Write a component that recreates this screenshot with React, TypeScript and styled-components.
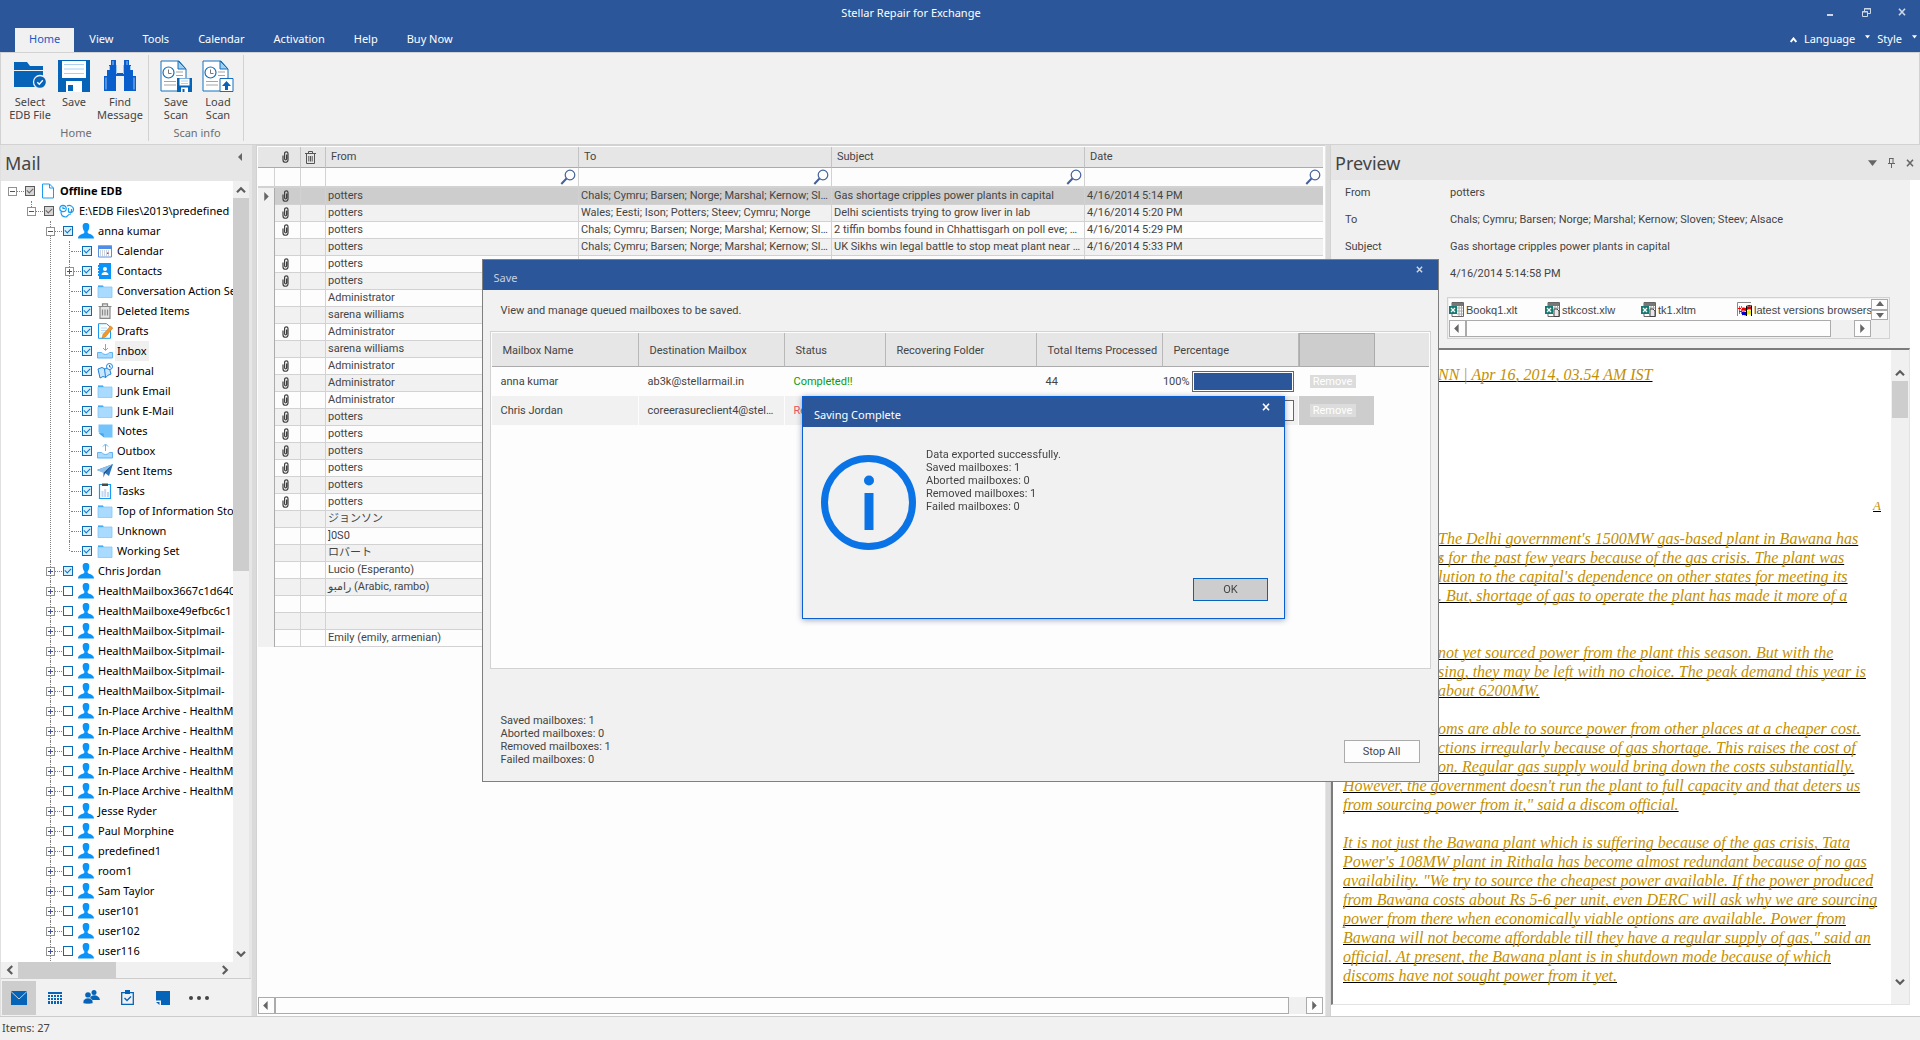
import React from "react";
import styled, { createGlobalStyle, css } from "styled-components";

const ui = `"Noto Sans", "Open Sans", sans-serif`;
const grid = `Roboto, "Liberation Sans", "Noto Sans CJK JP", "DejaVu Sans", sans-serif`;
const files = `"Liberation Sans", sans-serif`;
const blue = "#2b579a";
const ink = "#444444";
const line = "#d2d2d2";
const accent = "#0563c1";

const Global = createGlobalStyle`
  *, *::before, *::after { box-sizing: border-box; }
  html, body, #root { margin: 0; height: 100%; }
  body { overflow: hidden; background: #f1f1f1; }
  button, input { font: inherit; color: inherit; margin: 0; padding: 0; border: 0; background: none; border-radius: 0; }
  svg { display: block; flex: none; }
  ul { list-style: none; margin: 0; padding: 0; }
`;

/* ---------- shell ---------- */
const Shell = styled.div`
  display: flex;
  flex-direction: column;
  height: 100vh;
  font: 11px/14px ${ui};
  color: ${ink};
  background: #f1f1f1;
`;
const Top = styled.header`
  background: ${blue};
  color: #fff;
`;
const TitleBar = styled.div`
  display: flex;
  height: 28px;
`;
const Title = styled.h1`
  flex: 1;
  margin: 0;
  font: 11px/26px ${ui};
  text-align: center;
`;
const WinButtons = styled.div`
  display: flex;
  padding-right: 10px;
  gap: 20px;
  height: 24px;
`;
const IconButton = styled.button<{ $tone?: string }>`
  display: grid;
  place-items: center;
  width: 16px;
  color: ${(p) => p.$tone ?? "#cfd8e6"};
`;
const TabRow = styled.nav`
  display: flex;
  gap: 1px;
  height: 24px;
  padding-left: 15px;
`;
const Tab = styled.button<{ $active?: boolean }>`
  padding: 0 14px;
  line-height: 22px;
  padding-bottom: 2px;
  height: ${(p) => (p.$active ? 25 : 24)}px;
  ${(p) => p.$active && css`
    padding-bottom: 3px;
    background: #f1f1f1;
    color: #1859c4;
  `}
`;
const Options = styled.div`
  display: flex;
  align-items: center;
  gap: 7px;
  margin-left: auto;
  padding-right: 3px;
`;
const OptionButton = styled.button`
  display: flex;
  align-items: center;
  gap: 10px;
  line-height: 22px;
  padding-bottom: 2px;
  svg { margin-bottom: 6px; }
`;

const Ribbon = styled.section`
  display: flex;
  height: 93px;
  border: 1px solid ${line};
  background: #f1f1f1;
`;
const Group = styled.div<{ $pad: string }>`
  display: flex;
  flex-direction: column;
  justify-content: space-between;
  margin: 2px 0 3px;
  padding: ${(p) => p.$pad};
  border-right: 1px solid ${line};
`;
const Tools = styled.div`
  display: flex;
`;
const Tool = styled.button<{ $w: number }>`
  display: flex;
  flex-direction: column;
  align-items: center;
  gap: 3px;
  width: ${(p) => p.$w}px;
  line-height: 13px;
  text-align: center;
`;
const GroupName = styled.div`
  text-align: center;
  color: #6d6d6d;
  line-height: 14px;
`;

const Main = styled.main`
  display: flex;
  flex: 1;
  min-height: 0;
  background: #e6e6e6;
`;
const Splitter = styled.div<{ $w: number }>`
  width: ${(p) => p.$w}px;
  border-left: 1px solid #e6e6e6;
  border-right: 1px solid ${line};
  background: #dadada;
`;
const Status = styled.footer`
  height: 24px;
  border-top: 1px solid #cccccc;
  padding-left: 2px;
  line-height: 22px;
`;

/* ---------- sidebar ---------- */
const Side = styled.aside`
  display: flex;
  flex-direction: column;
  width: 251px;
  border-left: 1px solid #e0e0e0;
`;
const PaneHead = styled.div`
  display: flex;
  justify-content: space-between;
  align-items: flex-start;
  height: 36px;
  padding: 0 2px 0 4px;
`;
const PaneTitle = styled.h2`
  margin: 0;
  font: 18px/36px ${ui};
`;
const FoldButton = styled(IconButton)`
  height: 24px;
`;
const TreeArea = styled.div`
  display: flex;
  flex: 1;
  min-height: 0;
  margin-right: 2px;
`;
const TreeBox = styled.div`
  flex: 1;
  min-width: 0;
  overflow: hidden;
  background: #fff;
  color: #000;
`;
const Node = styled.li<{ $depth: number; $last?: boolean }>`
  position: relative;
  ${(p) => p.$depth > 0 && css`
    &::before {
      content: "";
      position: absolute;
      left: ${p.$depth * 19 + 11}px;
      top: 0;
      bottom: ${p.$last ? "auto" : 0};
      height: ${p.$last ? "10px" : "auto"};
      border-left: 1px dotted #808080;
    }
  `}
`;
const NodeRow = styled.div<{ $depth: number }>`
  position: relative;
  display: flex;
  align-items: center;
  height: 20px;
  padding-left: ${(p) => p.$depth * 19 + 7}px;
  white-space: nowrap;
  &::before {
    content: "";
    position: absolute;
    left: ${(p) => p.$depth * 19 + 13}px;
    top: 10px;
    width: 10px;
    border-top: 1px dotted #808080;
  }
`;
const Expander = styled.button`
  position: relative;
  display: grid;
  place-items: center;
  flex: none;
  width: 9px;
  height: 9px;
  margin-right: 8px;
  border: 1px solid #919191;
  background: #fff;
`;
const NoExpander = styled.span`
  flex: none;
  width: 17px;
`;
const Check = styled.input<{ $grey?: boolean }>`
  appearance: none;
  position: relative;
  flex: none;
  width: 10px;
  height: 10px;
  margin-right: 5px;
  border: 1px solid ${(p) => (p.$grey ? "#5a5a5a" : "#0a6ab6")};
  background: ${(p) => (p.$grey ? "#d6d6d6" : "#fff")};
  &:checked {
    background-color: ${(p) => (p.$grey ? "#d6d6d6" : "#d9effb")};
  }
  &:checked::after {
    content: "";
    position: absolute;
    left: 1px;
    top: 1px;
    width: 6px;
    height: 4px;
    border: solid ${(p) => (p.$grey ? "#666" : "#0a78c8")};
    border-width: 0 0 1px 1px;
    transform: rotate(-45deg);
  }
`;
const NodeName = styled.label<{ $bold?: boolean; $selected?: boolean }>`
  margin-left: 2px;
  padding: 0 2px;
  line-height: 20px;
  font-weight: ${(p) => (p.$bold ? 700 : 400)};
  background: ${(p) => (p.$selected ? "#f0f0f0" : "transparent")};
`;
const NavBar = styled.div`
  display: flex;
  align-items: center;
  gap: 2px;
  height: 38px;
  padding-left: 1px;
  border-top: 1px solid #cdcdcd;
  background: #f1f1f1;
`;
const NavButton = styled.button<{ $on?: boolean }>`
  display: grid;
  place-items: center;
  width: 34px;
  height: 34px;
  background: ${(p) => (p.$on ? "#cdcdcd" : "transparent")};
`;

/* ---------- scrollbars ---------- */
const VBar = styled.div<{ $w: number; $pad?: string }>`
  display: flex;
  flex-direction: column;
  width: ${(p) => p.$w}px;
  padding: ${(p) => p.$pad ?? "0"};
  background: #f0f0f0;
`;
const VThumb = styled.div<{ $h: string }>`
  height: ${(p) => p.$h};
  margin-bottom: auto;
  background: #cdcdcd;
`;
const ScrollEnd = styled.button`
  display: grid;
  place-items: center;
  flex: none;
  height: 17px;
  width: 100%;
`;
const HBar = styled.div`
  display: flex;
  height: 16px;
  margin-right: 2px;
  padding-right: 16px;
  background: #f0f0f0;
`;
const HThumb = styled.div`
  width: 98px;
  margin-right: auto;
  background: #cdcdcd;
`;
const HEnd = styled.button`
  display: grid;
  place-items: center;
  width: 17px;
`;
const BoxBar = styled.div<{ $right?: number }>`
  display: flex;
  height: 17px;
  background: #f0f0f0;
  padding-right: ${(p) => p.$right ?? 0}px;
`;
const BoxEnd = styled.button`
  display: grid;
  place-items: center;
  width: 17px;
  border: 1px solid #ababab;
  background: #fdfdfd;
`;
const BoxThumb = styled.div<{ $gap: number }>`
  flex: 1;
  margin-right: ${(p) => p.$gap}px;
  border: 1px solid #ababab;
  background: #fdfdfd;
`;

/* ---------- message grid ---------- */
const GridPane = styled.section`
  display: flex;
  flex-direction: column;
  flex: 1;
  min-width: 0;
  padding: 1px 2px 2px 1px;
  background: #fdfdfd;
  border-top: 1px solid ${line};
  font: 11px/14px ${grid};
`;
const GridScroll = styled.div`
  flex: 1;
  min-height: 0;
  overflow: hidden;
`;
const MailTable = styled.table`
  width: 100%;
  table-layout: fixed;
  border-collapse: separate;
  border-spacing: 0;
  th {
    height: 21px;
    padding: 0 5px;
    text-align: left;
    font-weight: 400;
    background: #e6e6e6;
    border-bottom: 1px solid #ababab;
    border-right: 1px solid #c4c4c4;
  }
  th:first-child, th:last-child { border-right: 0; }
  th:nth-child(2), th:nth-child(3) { padding: 0 5px 0 0; }
  th svg { margin: 0 auto; }
`;
const FilterCell = styled.td`
  height: 20px;
  padding: 0 2px;
  border-right: 1px solid ${line};
  border-bottom: 2px solid ${line};
  &:last-child { border-right: 0; }
`;
const FilterBox = styled.label`
  display: flex;
  align-items: center;
  input { flex: 1; min-width: 0; height: 16px; outline: 0; }
`;
const MailRow = styled.tr<{ $tone: string }>`
  td {
    height: 17px;
    padding: 0 2px;
    line-height: 16px;
    overflow: hidden;
    white-space: nowrap;
    text-overflow: ellipsis;
    background: ${(p) => p.$tone};
    border-right: 1px solid ${line};
    border-bottom: 1px solid ${line};
  }
  td:last-child { border-right: 0; }
  td:first-child { background: #f1f1f1; border-bottom: 0; border-right-color: #ababab; }
  td:nth-child(2) { padding: 0 5px 0 0; }
  td svg { margin: 0 auto; }
`;

/* ---------- preview ---------- */
const Preview = styled.aside`
  display: flex;
  flex-direction: column;
  width: 589px;
  background: #fff;
`;
const PreviewHead = styled(PaneHead)`
  background: #e6e6e6;
  height: 35px;
  align-items: center;
`;
const HeadButtons = styled.div`
  display: flex;
  gap: 3px;
`;
const Facts = styled.dl`
  display: grid;
  grid-template-columns: 105px 1fr;
  align-content: start;
  row-gap: 13px;
  margin: 0 10px 0 0;
  padding: 6px 14px 0;
  height: 117px;
  font: 11px/14px ${grid};
  background: #f1f1f1;
  dt, dd { margin: 0; }
`;
const AttachWrap = styled.div`
  margin-right: 10px;
  padding: 0 20px 9px 116px;
  background: #f1f1f1;
`;
const AttachBox = styled.div`
  border: 1px solid ${line};
  padding: 1px;
`;
const AttachRow = styled.div`
  display: flex;
  height: 21px;
`;
const AttachList = styled.ul`
  display: flex;
  flex: 1;
  min-width: 0;
  overflow: hidden;
  background: #fdfdfd;
`;
const AttachItem = styled.li`
  display: flex;
  align-items: center;
  gap: 2px;
  flex: none;
  width: 96px;
  font: 11px/20px ${files};
  white-space: nowrap;
`;
const Spin = styled.div`
  display: flex;
  flex-direction: column;
  width: 17px;
`;
const SpinButton = styled.button`
  display: grid;
  place-items: center;
  flex: 1;
  border: 1px solid #ababab;
  background: #fdfdfd;
`;
const MessageFrame = styled.div`
  display: flex;
  flex: 1;
  min-height: 0;
  margin: 0 10px 11px 0;
  border: 1px solid #e3e3e3;
  border-left: 2px solid #7c7c7c;
  border-top: 2px solid #7c7c7c;
`;
const MessageBody = styled.article`
  flex: 1;
  min-width: 0;
  overflow: hidden;
  padding: 15px 0 0 10px;
  color: #c49000;
  font: italic 16px/19px "Liberation Serif", serif;
`;
const Para = styled.p<{ $gap: number }>`
  margin: 0 0 ${(p) => p.$gap}px;
`;
const TextLine = styled.span`
  display: block;
  white-space: pre;
  text-decoration: underline 1px #000;
  text-underline-offset: 1px;
  text-decoration-skip-ink: none;
`;
const Lead = styled.span`
  display: inline-block;
  width: 95px;
  text-align: right;
`;
const Footnote = styled(TextLine)`
  font-size: 13px;
  text-align: right;
  padding-right: 10px;
`;

/* ---------- dialogs ---------- */
const Overlay = styled.div`
  position: fixed;
  inset: 0;
  display: grid;
  place-items: center;
`;
const SaveDialog = styled.section`
  display: flex;
  flex-direction: column;
  width: 957px;
  height: 523px;
  border: 1px solid #7f7f7f;
  background: #f1f1f1;
  font: 11px/13px ${grid};
`;
const DialogTitle = styled.header<{ $dim?: boolean }>`
  display: flex;
  justify-content: space-between;
  height: 30px;
  padding: 2px 10px 0 11px;
  background: ${blue};
  color: ${(p) => (p.$dim ? "#c8d0dc" : "#fff")};
  font: 11px/14px ${ui};
  h2 { margin: 9px 0 0; font: inherit; }
  button { height: 16px; }
`;
const Intro = styled.p`
  margin: 14px 18px 14px;
`;
const QueueBox = styled.div`
  height: 338px;
  margin: 0 7px;
  padding: 1px;
  border: 1px solid ${line};
  background: #fdfdfd;
`;
const QueueTable = styled.table`
  width: 100%;
  table-layout: fixed;
  border-collapse: separate;
  border-spacing: 0;
  th {
    height: 34px;
    padding: 2px 0 0 11px;
    text-align: left;
    font-weight: 400;
    white-space: nowrap;
    background: #e6e6e6;
    border-bottom: 1px solid #ababab;
    border-right: 1px solid #b8b8b8;
  }
  th:last-child { border-right: 0; }
  th:nth-child(7) { background: #cdcdcd; border: 1px solid #ababab; }
  td {
    height: 29px;
    padding: 0 9px;
    white-space: nowrap;
    overflow: hidden;
    text-overflow: ellipsis;
    border-right: 1px solid #fdfdfd;
  }
  td:nth-child(6) { padding: 0 4px; }
  td:nth-child(7) { padding: 0 11px; }
`;
const QueueRow = styled.tr<{ $alt?: boolean }>`
  td { background: ${(p) => (p.$alt ? "#f1f1f1" : "transparent")}; }
  td:nth-child(7) { background: ${(p) => (p.$alt ? "#cdcdcd" : "transparent")}; }
  td:last-child { background: transparent; }
`;
const State = styled.span<{ $color: string }>`
  color: ${(p) => p.$color};
`;
const Percent = styled.div`
  display: flex;
  align-items: center;
  gap: 2px;
  justify-content: flex-end;
`;
const Meter = styled.div`
  flex: none;
  width: 102px;
  height: 21px;
  padding: 1px;
  border: 1px solid #666;
  background: #fdfdfd;
`;
const MeterFill = styled.div<{ $value: number }>`
  width: ${(p) => p.$value}%;
  height: 100%;
  background: ${blue};
`;
const RemoveButton = styled.button`
  display: block;
  width: 46px;
  height: 13px;
  line-height: 13px;
  background: #dcdcdc;
  color: #fff;
`;
const Lines = styled.div`
  white-space: pre-line;
`;
const PushButton = styled.button<{ $primary?: boolean; $w?: number }>`
  width: ${(p) => p.$w ?? 75}px;
  height: 23px;
  border: 1px solid ${(p) => (p.$primary ? accent : "#ababab")};
  background: ${(p) => (p.$primary ? "#cdcdcd" : "#fdfdfd")};
`;
const SaveFoot = styled.footer`
  display: flex;
  justify-content: space-between;
  align-items: flex-end;
  flex: 1;
  padding: 0 18px 15px;
  ${PushButton} { margin-bottom: 3px; }
`;
const DoneDialog = styled.section`
  position: absolute;
  left: 802px;
  top: 396px;
  display: flex;
  flex-direction: column;
  width: 483px;
  height: 223px;
  border: 1px solid #0a5fd0;
  background: #f1f1f1;
  box-shadow: 0 1px 6px rgba(0, 30, 90, 0.4);
  font: 11px/13px ${grid};
`;
const DoneBody = styled.div`
  display: flex;
  gap: 10px;
  flex: 1;
  padding: 28px 18px 0;
  ${Lines} { margin-top: -7px; }
`;
const DoneFoot = styled.footer`
  display: flex;
  justify-content: flex-end;
  padding: 0 16px 17px;
`;

/* ---------- glyphs ---------- */
const Cross = ({ s = 8 }: { s?: number }) => (
  <svg width={s} height={s} viewBox="0 0 8 8" stroke="currentColor" strokeWidth="1.6"><path d="M1 .8 7 7.2M7 .8 1 7.2" /></svg>
);
const Tri = ({ d, c = "#666", s = 6 }: { d: "l" | "r" | "u" | "d"; c?: string; s?: number }) => {
  const p = { l: "M5 0v8L1 4z", r: "M2 0v8l4-4z", u: "M0 6h8L4 1z", d: "M0 2h8L4 7z" }[d];
  return <svg width={s} height={s} viewBox="0 0 8 8" fill={c}><path d={p} /></svg>;
};
const Chevron = ({ d }: { d: "l" | "r" | "u" | "d" }) => {
  const r = { u: 0, r: 90, d: 180, l: 270 }[d];
  return (
    <svg width="10" height="10" viewBox="0 0 10 10" fill="none" stroke="#5c5c5c" strokeWidth="2.2">
      <path d="M1 7.2 5 3.2 9 7.2" transform={`rotate(${r} 5 5)`} />
    </svg>
  );
};
const Clip = () => (
  <svg width="7" height="12" viewBox="0 0 7 12" fill="none" stroke="#404040" strokeWidth="1.2">
    <path d="M2.600 3v4.800c0 1.500 2 1.500 2 0V3.500M1 4.500V9c0 3 5 3 5 0V2.500C6 .300 2.600.300 2.600 2.500V4" />
  </svg>
);
const Bin = () => (
  <svg width="11" height="13" viewBox="0 0 11 13" fill="none" stroke="#555">
    <path d="M0 2.500h11M3.500 2.500v-2h4v2M1.500 3v9.500h8V3M3.800 5v5.500M5.500 5v5.500M7.200 5v5.500" />
  </svg>
);
const Lens = () => (
  <svg width="16" height="16" viewBox="0 0 16 16" fill="none" stroke="#44619a">
    <circle cx="10" cy="6" r="4.800" strokeWidth="1.200" /><path d="M6.500 9.500 1.300 15" strokeWidth="2" />
  </svg>
);
const Deep = "#0563b8";
const FolderTool = () => (
  <svg width="32" height="32" viewBox="0 0 32 32">
    <path d="M0 2h13l3 4h13v4H0zM0 11h29v16H0z" fill={Deep} />
    <circle cx="26" cy="22" r="6.500" fill={Deep} stroke="#f1f1f1" strokeWidth="1.300" />
    <path d="M23.300 22.200l2 2 3.500-4" fill="none" stroke="#fff" strokeWidth="1.300" />
  </svg>
);
const FloppyTool = () => (
  <svg width="32" height="32" viewBox="0 0 32 32">
    <path d="M0 0h32v32H0z" fill={Deep} /><path d="M4 1h24v17H4zM8 21h16v11H8z" fill="#fff" />
    <path d="M6 4.500h20M6 9h20M6 13.500h20" stroke="#a9d2f3" /><path d="M10 25h5v6h-5z" fill={Deep} />
  </svg>
);
const BinocTool = () => (
  <svg width="32" height="32" viewBox="0 0 32 32" fill="#0a5ecb">
    <path d="M7 0h5v5h1v8h6V5h1V0h5v5h2v5h2v6h3v15H20V16h-8v15H0V16h3v-6h2V5h2z" />
    <path d="M13.500 6v5h5V6z" fill="#f1f1f1" />
    <path d="M5.500 6v4M26.500 6v4M2 17.500v12M30 17.500v12M9 1v4M23 1v4M12.500 5v9M19.500 5v9" stroke="#9cc6f5" />
  </svg>
);
const ScanTool = ({ load }: { load?: boolean }) => (
  <svg width="32" height="32" viewBox="0 0 32 32">
    <path d="M1 1h18l7 8v22H1z" fill="#fff" stroke="#1470bd" /><path d="M18 1v8h8z" fill="#9fd0f2" stroke="#1470bd" />
    <path d="M16 12h7M16 15.500h7M4 21.500h12M4 25h12" stroke="#a5a5a5" />
    <circle cx="8.500" cy="12.500" r="5.500" fill="#fff" stroke="#1470bd" strokeWidth="1.200" /><path d="M8.500 9.500v4h3" fill="none" stroke="#777" />
    {load ? (
      <g><path d="M18 18.500h13v13H18z" fill="#fff" stroke="#1470bd" /><path d="M24.500 21l4.500 5h-3v4h-3v-4h-3z" fill={Deep} /></g>
    ) : (
      <g><path d="M17 18h15v14H17z" fill={Deep} /><path d="M19.500 18.500h10v7h-10zM21 27.500h7V32h-7z" fill="#fff" /><path d="M21 21h7M21 23.500h7" stroke="#a9d2f3" /><path d="M22.500 29h2v3h-2z" fill={Deep} /></g>
    )}
  </svg>
);

const azure = "#0a94fa";
const nodeIcons: Record<string, React.ReactNode> = {
  page: <path d="M2.500 1h7l4 4v10h-11zM9.500 1v4h4" fill="#fff" stroke="#1a9af0" />,
  db: <g fill="none" stroke="#1a9af0" strokeWidth="1.200"><circle cx="4" cy="5.500" r="3.200" /><path d="M4 3.500v2h2M8 3c3-2 7 1 6.500 4s-3 3-5 2M2 9c0 4 3 5 5 5 2-1 2-3 5-3M9.500 5v4h3V6" /></g>,
  user: <path d="M8 0c-3 0-3.500 2-3.300 4 .1 2 .8 3.300 1.600 4.200v1.500C5.500 11.200 0 11 0 15.500h16c0-4.500-5.500-4.300-6.300-5.800V8.200c.8-.9 1.500-2.200 1.600-4.200C11.500 2 11 0 8 0z" fill={azure} />,
  calendar: <g><path d="M1.500 3h13v11h-13z" fill="#fff" stroke="#5b8fdc" /><path d="M1 2.500h14V6H1z" fill="#4f8ee6" /><path d="M3 8h10M3 10h10M3 12h10" stroke="#9aa8bd" strokeDasharray="1 1" /><path d="M10 9.500h1.500v1.500H10z" fill="#e33" /></g>,
  contacts: <g><path d="M2 0h12v16H2z" fill={azure} /><circle cx="8" cy="6" r="2" fill="#fff" /><path d="M4.500 12c0-4 7-4 7 0z" fill="#fff" /><path d="M1.500 2v12" stroke={azure} strokeDasharray="2 1" /></g>,
  folder: <g><path d="M1 2.500h5l1 2H1z" fill="#1b9df5" /><path d="M1 4h14v10.500H1z" fill="#a9daff" stroke="#84c8fb" strokeWidth=".8" /></g>,
  bin: <path d="M1.500 3.500h13M5.500 3V.8h5V3M3 4v11.300h10V4M5.500 6.500v6M8 6.500v6M10.500 6.500v6" fill="#e4e4e4" stroke="#888" strokeWidth="1.200" />,
  draft: <g><path d="M1.500.700h8l4 3.500V15.300h-12z" fill="#fff" stroke="#1a9af0" /><path d="M4 5h6M4 7.500h5M4 10h4" stroke="#a9daff" /><path d="M5 15l1-3.500L13.500 3l2.300 2L8.500 14z" fill="#f09a2e" stroke="#c26f12" strokeWidth=".5" /></g>,
  inbox: <g fill="none" stroke="#5eb3f4"><path d="M8.500 1v6M6 5l2.500 2.500L11 5" /><path d="M.500 9.500h4c1 0 1 2 4 2s3-2 4-2h3v5.500H.500z" fill="#a9daff" /></g>,
  outbox: <g fill="none" stroke="#5eb3f4"><path d="M8.500 8V1.500M6 3.500 8.500 1 11 3.500" /><path d="M.500 9.500h4c1 0 1 2 4 2s3-2 4-2h3v5.500H.500z" fill="#a9daff" /></g>,
  journal: <g><path d="M1 6l4-1.500 3 1.500 4-2 2 7-3.500 1.500-1.500 2-3-1-3 1.500z" fill="#c9e6fc" stroke="#1a80dc" /><path d="M7.500 6l1 8" stroke="#1a80dc" /><circle cx="12.500" cy="3.500" r="3" fill="#fff" stroke="#1a80dc" /><path d="M12.500 2v2H14" fill="none" stroke="#1a80dc" /></g>,
  note: <g><path d="M1.500 1.500h14v13H7L1.500 9z" fill="#74c4fc" /><path d="M1.500 10l5 .500.500 4z" fill="#3ea4ee" /></g>,
  sent: <g><path d="M0 7 16 1l-4 12-4-3z" fill="#2f76bd" /><path d="M0 7l16-6L6.500 10z" fill="#8fc0ea" /><path d="M6.500 10 16 1l-8 9.500-1.500 4z" fill="#1c4f8a" /></g>,
  task: <g><path d="M2.500 1.500h11v14h-11z" fill="#fff" stroke="#1a9af0" strokeWidth="1.200" /><path d="M5 .500h6v2.500H5z" fill="#4a4a4a" /><path d="M4.500 8h2v6h-2zM7.200 6h2v8h-2zM10 9h2v5h-2z" fill="#c5d6f0" /></g>,
};
const NodeIcon = ({ name }: { name: string }) => <svg width="16" height="16" viewBox="0 0 16 16">{nodeIcons[name]}</svg>;

/* ---------- data ---------- */
type TreeItem = { name: string; icon: string; on?: boolean; grey?: boolean; bold?: boolean; sel?: boolean; mark?: "+" | "-"; kids?: TreeItem[] };
const leaf = (name: string, icon: string, extra: Partial<TreeItem> = {}): TreeItem => ({ name, icon, on: true, ...extra });
const box = (name: string, on = false): TreeItem => ({ name, icon: "user", on, mark: "+" });
const tree: TreeItem[] = [
  { name: "Offline EDB", icon: "page", on: true, grey: true, bold: true, mark: "-", kids: [
    { name: "E:\\EDB Files\\2013\\predefined", icon: "db", on: true, grey: true, mark: "-", kids: [
      { name: "anna kumar", icon: "user", on: true, mark: "-", kids: [
        leaf("Calendar", "calendar"), leaf("Contacts", "contacts", { mark: "+" }), leaf("Conversation Action Settings", "folder"),
        leaf("Deleted Items", "bin"), leaf("Drafts", "draft"), leaf("Inbox", "inbox", { sel: true }), leaf("Journal", "journal"),
        leaf("Junk Email", "folder"), leaf("Junk E-Mail", "folder"), leaf("Notes", "note"), leaf("Outbox", "outbox"),
        leaf("Sent Items", "sent"), leaf("Tasks", "task"), leaf("Top of Information Store", "folder"),
        leaf("Unknown", "folder"), leaf("Working Set", "folder"),
      ] },
      box("Chris Jordan", true), box("HealthMailbox3667c1d640"), box("HealthMailboxe49efbc6c1"),
      box("HealthMailbox-Sitplmail-"), box("HealthMailbox-Sitplmail-"), box("HealthMailbox-Sitplmail-"), box("HealthMailbox-Sitplmail-"),
      box("In-Place Archive - HealthMailbox"), box("In-Place Archive - HealthMailbox"), box("In-Place Archive - HealthMailbox"),
      box("In-Place Archive - HealthMailbox"), box("In-Place Archive - HealthMailbox"),
      box("Jesse Ryder"), box("Paul Morphine"), box("predefined1"), box("room1"), box("Sam Taylor"), box("user101"), box("user102"), box("user116"),
    ] },
  ] },
];

const chals = "Chals; Cymru; Barsen; Norge; Marshal; Kernow; Sloven; Steev; Alsace";
type Mail = [boolean, string, string?, string?, string?];
const mails: Mail[] = [
  [true, "potters", chals, "Gas shortage cripples power plants in capital", "4/16/2014 5:14 PM"],
  [true, "potters", "Wales; Eesti; Ison; Potters; Steev; Cymru; Norge", "Delhi scientists trying to grow liver in lab", "4/16/2014 5:20 PM"],
  [true, "potters", chals, "2 tiffin bombs found in Chhattisgarh on poll eve; 2 more defused", "4/16/2014 5:29 PM"],
  [false, "potters", chals, "UK Sikhs win legal battle to stop meat plant near gurdwara", "4/16/2014 5:33 PM"],
  [true, "potters"], [true, "potters"], [false, "Administrator"], [false, "sarena williams"], [true, "Administrator"],
  [false, "sarena williams"], [true, "Administrator"], [true, "Administrator"], [true, "Administrator"],
  [true, "potters"], [true, "potters"], [true, "potters"], [true, "potters"], [true, "potters"], [true, "potters"],
  [false, "ジョンソン"], [false, "]0S0"], [false, "ロバート"], [false, "Lucio (Esperanto)"], [false, "رامبو (Arabic, rambo)"],
  [false, ""], [false, ""], [false, "Emily (emily, armenian)"],
];

const story: [string, string][][] = [
  [["DELHI: ", "The Delhi government's 1500MW gas-based plant in Bawana has"], ["been in the new", "s for the past few years because of the gas crisis. The plant was"], ["seen as the so", "lution to the capital's dependence on other states for meeting its"], ["power needs", ". But, shortage of gas to operate the plant has made it more of a"], ["liability.", ""]],
  [["Discoms have ", "not yet sourced power from the plant this season. But with the"], ["demand ri", "sing, they may be left with no choice. The peak demand this year is"], ["likely to be ", "about 6200MW."]],
  [["\"The disc", "oms are able to source power from other places at a cheaper cost."], ["The plant fun", "ctions irregularly because of gas shortage. This raises the cost of"], ["generati", "on. Regular gas supply would bring down the costs substantially."], ["", "However, the government doesn't run the plant to full capacity and that deters us"], ["", "from sourcing power from it,\" said a discom official."]],
  [["", "It is not just the Bawana plant which is suffering because of the gas crisis, Tata"], ["", "Power's 108MW plant in Rithala has become almost redundant because of no gas"], ["", "availability. \"We try to source the cheapest power available. If the power produced"], ["", "from Bawana costs about Rs 5-6 per unit, even DERC will ask why we are sourcing"], ["", "power from there when economically viable options are available. Power from"], ["", "Bawana will not become affordable till they have a regular supply of gas,\" said an"], ["", "official. At present, the Bawana plant is in shutdown mode because of which"], ["", "discoms have not sought power from it yet."]],
];

/* ---------- parts ---------- */
const Branch = ({ items, depth }: { items: TreeItem[]; depth: number }) => (
  <ul>
    {items.map((it, i) => {
      const id = `node-${depth}-${i}`;
      return (
        <Node key={id} $depth={depth} $last={i === items.length - 1 && depth !== 2}>
          <NodeRow $depth={depth}>
            {it.mark ? (
              <Expander aria-label={it.mark === "+" ? "Expand" : "Collapse"}>
                <svg width="5" height="5" viewBox="0 0 5 5" stroke="#3a50a0"><path d={it.mark === "+" ? "M0 2.500h5M2.500 0v5" : "M0 2.500h5"} /></svg>
              </Expander>
            ) : <NoExpander />}
            <Check id={id} type="checkbox" defaultChecked={it.on} $grey={it.grey} />
            <NodeIcon name={it.icon} />
            <NodeName htmlFor={id} $bold={it.bold} $selected={it.sel}>{it.name}</NodeName>
          </NodeRow>
          {it.kids && <Branch items={it.kids} depth={depth + 1} />}
        </Node>
      );
    })}
  </ul>
);

const navIcons = [
  <svg width="16" height="14" viewBox="0 0 16 14"><path d="M0 0h16v14H0z" fill={Deep} /><path d="M0 .500l8 7.500 8-7.500" fill="none" stroke="#cdcdcd" /></svg>,
  <svg width="14" height="12" viewBox="0 0 14 12" fill={Deep}><path d="M0 0h14v2H0zM0 3h2v2H0zM3 3h2v2H3zM6 3h2v2H6zM9 3h2v2H9zM12 3h2v2h-2zM0 6h2v2H0zM3 6h2v2H3zM6 6h2v2H6zM9 6h2v2H9zM12 6h2v2h-2zM0 9h2v3H0zM3 9h2v3H3zM6 9h2v3H6zM9 9h2v3H9zM12 9h2v3h-2z" /></svg>,
  <svg width="17" height="15" viewBox="0 0 17 15" fill={Deep}><circle cx="11" cy="2.500" r="2.500" /><path d="M7 9c0-5 9-5 10 1H9z" /><circle cx="5" cy="5" r="2.800" /><path d="M0 12.500c0-6 10-6 10 0 0 2-10 2-10 0z" stroke="#f1f1f1" strokeWidth=".6" /></svg>,
  <svg width="13" height="15" viewBox="0 0 13 15" fill="none" stroke={Deep} strokeWidth="1.300"><path d="M.700 2.700h11.600v11.600H.700z" /><path d="M4 0h5v4H4z" fill={Deep} stroke="none" /><path d="M3.500 8l2.500 2.500 4-4" /></svg>,
  <svg width="14" height="14" viewBox="0 0 14 14" fill={Deep}><path d="M0 0h14v14H5V9.500H0z" /><path d="M0 11h3.500v3z" /></svg>,
  <svg width="20" height="4" viewBox="0 0 20 4" fill="#444"><circle cx="2" cy="2" r="2" /><circle cx="10" cy="2" r="2" /><circle cx="18" cy="2" r="2" /></svg>,
];
const navNames = ["Mail", "Calendar", "People", "Tasks", "Notes", "More"];

const SheetIcon = ({ kind }: { kind: number }) =>
  kind === 3 ? (
    <svg width="15" height="15" viewBox="0 0 15 15"><path d="M.500 14V.500H14" fill="#fff" stroke="#888" /><path d="M2 5h3M2 8h3M2 11h3" stroke="#000" strokeDasharray="1 1" /><path d="M1 6.500h3M2 9.500h3" stroke="#e00" /><path d="M5 6c1.500-1 3 0 4 0v3c-1 0-2.500-1-4 0z" fill="#e00" /><path d="M10 5c1.500-1 3-1 5 0v3c-2-1-3.500-1-5 0z" fill="#d00" /><path d="M5 10c1.500-1 3 0 4 0v3.500c-1 0-2.500-1-4 0z" fill="#00c" /><path d="M10 9c1.500-1 3-1 5 0v4c-2-1-3.500-1-5 0z" fill="#ee0" /><path d="M9.500 4.500v9.500M14.500 4v10M9 4.500c2-1 4-1 6-.5" stroke="#000" fill="none" /></svg>
  ) : (
    <svg width="15" height="15" viewBox="0 0 15 15"><path d="M3 .500h11.500v14H3z" fill="#fff" stroke="#666" /><path d="M3 1h11v3H3z" fill="#777" /><path d="M8 6h6M8 9h6M8 12h6M10 4v10M12.500 4v10" stroke="#aaa" /><path d="M0 4h8v8H0z" fill="#157a72" /><path d="M2 6l4 4M6 6l-4 4" stroke="#fff" strokeWidth="1.300" />{kind > 0 && <path d="M9 7h3l2 2v5.500H9z" fill="#e8e8e8" stroke="#444" />}</svg>
  );

const counts = "Saved mailboxes: 1\nAborted mailboxes: 0\nRemoved mailboxes: 1\nFailed mailboxes: 0";

export default function App() {
  return (
    <Shell>
      <Global />
      <Top>
        <TitleBar>
          <Title>Stellar Repair for Exchange</Title>
          <WinButtons>
            <IconButton aria-label="Minimize"><svg width="6" height="8" viewBox="0 0 6 8"><path d="M0 6h6v2H0z" fill="currentColor" /></svg></IconButton>
            <IconButton aria-label="Restore"><svg width="9" height="9" viewBox="0 0 9 9" fill="none" stroke="currentColor"><path d="M2.500 3V.500h6v5H6M.500 3.500h5v5h-5zM2 1h7M0 4h6" /></svg></IconButton>
            <IconButton aria-label="Close"><Cross /></IconButton>
          </WinButtons>
        </TitleBar>
        <TabRow>
          {["Home", "View", "Tools", "Calendar", "Activation", "Help", "Buy Now"].map((t, i) => <Tab key={t} $active={i === 0}>{t}</Tab>)}
          <Options>
            <svg width="7" height="6" viewBox="0 0 7 6" fill="none" stroke="#fff" strokeWidth="2"><path d="M.700 5 3.500 1.500 6.300 5" /></svg>
            <OptionButton>Language <Tri d="d" c="#fff" s={5} /></OptionButton>
            <OptionButton>Style <Tri d="d" c="#fff" s={5} /></OptionButton>
          </Options>
        </TabRow>
      </Top>
      <Ribbon>
        <Group $pad="5px 2px 1px 5px">
          <Tools>
            <Tool $w={48}><FolderTool /><span>Select<br />EDB File</span></Tool>
            <Tool $w={40}><FloppyTool /><span>Save</span></Tool>
            <Tool $w={52}><BinocTool /><span>Find<br />Message</span></Tool>
          </Tools>
          <GroupName>Home</GroupName>
        </Group>
        <Group $pad="5px 4px 1px 6px">
          <Tools>
            <Tool $w={42}><ScanTool /><span>Save<br />Scan</span></Tool>
            <Tool $w={42}><ScanTool load /><span>Load<br />Scan</span></Tool>
          </Tools>
          <GroupName>Scan info</GroupName>
        </Group>
      </Ribbon>
      <Main>
        <Side>
          <PaneHead>
            <PaneTitle>Mail</PaneTitle>
            <FoldButton $tone="#666" aria-label="Collapse pane"><Tri d="l" s={8} /></FoldButton>
          </PaneHead>
          <TreeArea>
            <TreeBox><Branch items={tree} depth={0} /></TreeBox>
            <VBar $w={16}>
              <ScrollEnd aria-label="Scroll up"><Chevron d="u" /></ScrollEnd>
              <VThumb $h="373px" />
              <ScrollEnd aria-label="Scroll down"><Chevron d="d" /></ScrollEnd>
            </VBar>
          </TreeArea>
          <HBar>
            <HEnd aria-label="Scroll left"><Chevron d="l" /></HEnd>
            <HThumb />
            <HEnd aria-label="Scroll right"><Chevron d="r" /></HEnd>
          </HBar>
          <NavBar>
            {navIcons.map((icon, i) => <NavButton key={navNames[i]} aria-label={navNames[i]} $on={i === 0}>{icon}</NavButton>)}
          </NavBar>
        </Side>
        <Splitter $w={6} />
        <GridPane>
          <GridScroll>
            <MailTable>
              <colgroup>
                <col width="17" /><col width="26" /><col width="25" /><col width="253" /><col width="253" /><col width="253" /><col />
              </colgroup>
              <thead>
                <tr><th /><th><Clip /></th><th><Bin /></th><th>From</th><th>To</th><th>Subject</th><th>Date</th></tr>
              </thead>
              <tbody>
                <tr>
                  <FilterCell /><FilterCell /><FilterCell />
                  {["From", "To", "Subject", "Date"].map((f) => (
                    <FilterCell key={f}><FilterBox><input aria-label={`Filter ${f}`} /><Lens /></FilterBox></FilterCell>
                  ))}
                </tr>
                {mails.map(([clip, from, to, subject, date], i) => (
                  <MailRow key={i} $tone={i === 0 ? "#cdcdcd" : i % 2 ? "#f1f1f1" : "#fdfdfd"}>
                    <td>{i === 0 && <Tri d="r" s={9} />}</td>
                    <td>{clip && <Clip />}</td>
                    <td />
                    <td>{from}</td><td>{to}</td><td>{subject}</td><td>{date}</td>
                  </MailRow>
                ))}
              </tbody>
            </MailTable>
          </GridScroll>
          <BoxBar>
            <BoxEnd aria-label="Scroll left"><Tri d="l" s={9} /></BoxEnd>
            <BoxThumb $gap={17} />
            <BoxEnd aria-label="Scroll right"><Tri d="r" s={9} /></BoxEnd>
          </BoxBar>
        </GridPane>
        <Splitter $w={6} />
        <Preview>
          <PreviewHead>
            <PaneTitle>Preview</PaneTitle>
            <HeadButtons>
              <IconButton $tone="#666" aria-label="Pane menu"><Tri d="d" s={9} /></IconButton>
              <IconButton $tone="#666" aria-label="Pin"><svg width="7" height="10" viewBox="0 0 7 10" fill="none" stroke="currentColor"><path d="M1.500 0v5.500M1.500.500h4M5 0v5.500M0 5.500h7M3.500 6v4" /></svg></IconButton>
              <IconButton $tone="#666" aria-label="Close preview"><Cross /></IconButton>
            </HeadButtons>
          </PreviewHead>
          <Facts>
            <dt>From</dt><dd>potters</dd>
            <dt>To</dt><dd>{chals}</dd>
            <dt>Subject</dt><dd>Gas shortage cripples power plants in capital</dd>
            <dt /><dd>4/16/2014 5:14:58 PM</dd>
          </Facts>
          <AttachWrap>
            <AttachBox>
              <AttachRow>
                <AttachList>
                  {["Bookq1.xlt", "stkcost.xlw", "tk1.xltm", "latest versions browsers"].map((f, i) => (
                    <AttachItem key={f}><SheetIcon kind={i} />{f}</AttachItem>
                  ))}
                </AttachList>
                <Spin>
                  <SpinButton aria-label="Previous"><Tri d="u" s={8} /></SpinButton>
                  <SpinButton aria-label="Next"><Tri d="d" s={8} /></SpinButton>
                </Spin>
              </AttachRow>
              <BoxBar $right={17}>
                <BoxEnd aria-label="Scroll left"><Tri d="l" s={9} /></BoxEnd>
                <BoxThumb $gap={23} />
                <BoxEnd aria-label="Scroll right"><Tri d="r" s={9} /></BoxEnd>
              </BoxBar>
            </AttachBox>
          </AttachWrap>
          <MessageFrame>
            <MessageBody>
              <Para $gap={112}><TextLine><Lead>T</Lead>NN | Apr 16, 2014, 03.54 AM IST</TextLine></Para>
              <Para $gap={14}><Footnote>A</Footnote></Para>
              {story.map((para, i) => (
                <Para key={i} $gap={19}>
                  {para.map(([lead, rest]) => (
                    <TextLine key={lead + rest}>{lead && <Lead>{lead}</Lead>}{rest}</TextLine>
                  ))}
                </Para>
              ))}
            </MessageBody>
            <VBar $w={18} $pad="14px 1px">
              <ScrollEnd aria-label="Scroll up"><Chevron d="u" /></ScrollEnd>
              <VThumb $h="37px" />
              <ScrollEnd aria-label="Scroll down"><Chevron d="d" /></ScrollEnd>
            </VBar>
          </MessageFrame>
        </Preview>
      </Main>
      <Status>Items: 27</Status>

      <Overlay>
        <SaveDialog role="dialog" aria-label="Save">
          <DialogTitle $dim>
            <h2>Save</h2>
            <IconButton aria-label="Close save"><Cross s={7} /></IconButton>
          </DialogTitle>
          <Intro>View and manage queued mailboxes to be saved.</Intro>
          <QueueBox>
            <QueueTable>
              <colgroup>
                <col width="147" /><col width="146" /><col width="101" /><col width="151" /><col width="126" /><col width="136" /><col width="76" /><col />
              </colgroup>
              <thead>
                <tr><th>Mailbox Name</th><th>Destination Mailbox</th><th>Status</th><th>Recovering Folder</th><th>Total Items Processed</th><th>Percentage</th><th /><th /></tr>
              </thead>
              <tbody>
                <QueueRow>
                  <td>anna kumar</td><td>ab3k@stellarmail.in</td><td><State $color="#0a9a0a">Completed!!</State></td><td /><td>44</td>
                  <td><Percent>100%<Meter><MeterFill $value={100} /></Meter></Percent></td>
                  <td><RemoveButton>Remove</RemoveButton></td><td />
                </QueueRow>
                <QueueRow $alt>
                  <td>Chris Jordan</td><td>coreerasureclient4@stellarmail.in</td><td><State $color="#f0505a">Removed</State></td><td /><td />
                  <td><Percent><Meter><MeterFill $value={0} /></Meter></Percent></td>
                  <td><RemoveButton>Remove</RemoveButton></td><td />
                </QueueRow>
              </tbody>
            </QueueTable>
          </QueueBox>
          <SaveFoot>
            <Lines>{counts}</Lines>
            <PushButton $w={76}>Stop All</PushButton>
          </SaveFoot>
        </SaveDialog>
      </Overlay>
      <DoneDialog role="dialog" aria-label="Saving Complete">
        <DialogTitle>
          <h2>Saving Complete</h2>
          <IconButton $tone="#fff" aria-label="Close message"><Cross /></IconButton>
        </DialogTitle>
        <DoneBody>
          <svg width="95" height="95" viewBox="0 0 95 95" fill="#0a74e6">
            <circle cx="47.500" cy="47.500" r="44" fill="none" stroke="#0a74e6" strokeWidth="7" />
            <circle cx="48" cy="25.500" r="5" /><path d="M43.500 38h9v37h-9z" />
          </svg>
          <Lines>{"Data exported successfully.\n" + counts}</Lines>
        </DoneBody>
        <DoneFoot><PushButton $primary>OK</PushButton></DoneFoot>
      </DoneDialog>
    </Shell>
  );
}
